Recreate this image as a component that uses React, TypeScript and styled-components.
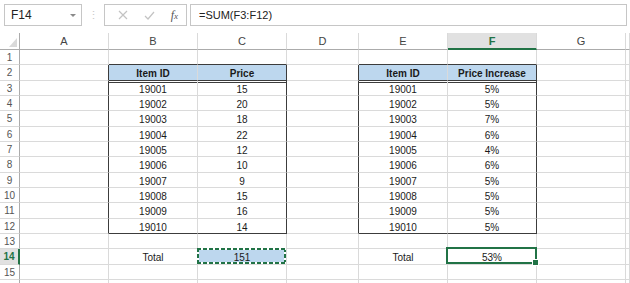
import React from 'react';
import styled, { createGlobalStyle } from 'styled-components';

const GlobalStyle = createGlobalStyle`
  html, body {
    margin: 0;
    padding: 0;
    background: #ffffff;
    overflow: hidden;
  }
  body {
    font-family: "Liberation Sans", Arial, sans-serif;
  }
`;

const GREEN = '#217346';
const GRID = '#dadada';
const HEAD_LINE = '#ababab';
const DARK = '#3c3c3c';
const BLUE = '#bdd7ee';

const columns = ['A', 'B', 'C', 'D', 'E', 'F', 'G'];
const ids = [19001, 19002, 19003, 19004, 19005, 19006, 19007, 19008, 19009, 19010];
const prices = [15, 20, 18, 22, 12, 10, 9, 15, 16, 14];
const increases = [5, 5, 7, 6, 4, 6, 5, 5, 5, 5];

export default function App() {
  // one entry per sheet row, keyed by column letter
  const rowContent = (r: number): Record<string, { text: string; bold?: boolean; fill?: boolean }> => {
    if (r === 2) {
      return {
        B: { text: 'Item ID', bold: true, fill: true },
        C: { text: 'Price', bold: true, fill: true },
        E: { text: 'Item ID', bold: true, fill: true },
        F: { text: 'Price Increase', bold: true, fill: true },
      };
    }
    if (r >= 3 && r <= 12) {
      const i = r - 3;
      return {
        B: { text: String(ids[i]) },
        C: { text: String(prices[i]) },
        E: { text: String(ids[i]) },
        F: { text: increases[i] + '%' },
      };
    }
    if (r === 14) {
      return {
        B: { text: 'Total' },
        C: { text: '151' },
        E: { text: 'Total' },
        F: { text: '53%' },
      };
    }
    return {};
  };

  const inTable = (col: string, r: number) =>
    r >= 2 && r <= 12 && (col === 'B' || col === 'C' || col === 'E' || col === 'F');

  const rows = Array.from({ length: 16 }, (_, i) => i + 1);

  return (
    <>
      <GlobalStyle />
      <Page>
        <FormulaBar>
          <NameBox>
            <span>F14</span>
            <DropArrow />
          </NameBox>
          <Grip>⋮</Grip>
          <FxButtons>
            <svg width="10" height="10" viewBox="0 0 10 10">
              <path d="M1 1 L9 9 M9 1 L1 9" stroke="#c3c3c3" strokeWidth="1.2" fill="none" />
            </svg>
            <svg width="11" height="9" viewBox="0 0 11 9">
              <path d="M1 5 L4 8 L10 1" stroke="#c3c3c3" strokeWidth="1.2" fill="none" />
            </svg>
            <FxLabel>
              f<small>x</small>
            </FxLabel>
          </FxButtons>
          <FormulaInput>=SUM(F3:F12)</FormulaInput>
        </FormulaBar>

        <Sheet>
          <Corner>
            <svg width="8" height="9" viewBox="0 0 8 9">
              <polygon points="8,0 8,9 0,9" fill="#d9d9d9" />
            </svg>
          </Corner>
          {columns.map((c) => (
            <ColHead key={c} $active={c === 'F'}>
              {c}
            </ColHead>
          ))}
          <ColHead $active={false} />

          {rows.map((r) => {
            const content = rowContent(r);
            return (
              <React.Fragment key={r}>
                <RowHead $active={r === 14}>{r <= 15 ? r : ''}</RowHead>
                {columns.map((c) => {
                  const cell = content[c];
                  const darkRight =
                    r >= 2 && r <= 12 && (c === 'A' || c === 'C' || c === 'D' || c === 'F');
                  const darkBottom =
                    (r === 1 || r === 2 || r === 12) &&
                    (c === 'B' || c === 'C' || c === 'E' || c === 'F');
                  return (
                    <Cell
                      key={c}
                      $darkRight={darkRight}
                      $darkBottom={darkBottom}
                      $fill={!!cell?.fill}
                      $bold={!!cell?.bold}
                      $double={r === 3 && inTable(c, r)}
                    >
                      {r === 14 && c === 'C' && <CopyMarquee />}
                      {r === 14 && c === 'F' && (
                        <Selection>
                          <FillHandle />
                        </Selection>
                      )}
                      <CellText>{cell?.text}</CellText>
                    </Cell>
                  );
                })}
                <Cell $darkRight={false} $darkBottom={false} $fill={false} $bold={false} $double={false} />
              </React.Fragment>
            );
          })}
        </Sheet>
      </Page>
    </>
  );
}

const Page = styled.div`
  width: 630px;
  height: 283px;
  overflow: hidden;
  background: #ffffff;
`;

const FormulaBar = styled.div`
  height: 33px;
  box-sizing: border-box;
  padding: 4px 0 0 4px;
  display: flex;
  align-items: flex-start;
`;

const NameBox = styled.div`
  width: 78px;
  height: 22px;
  box-sizing: border-box;
  border: 1px solid #c6c6c6;
  display: flex;
  align-items: center;
  justify-content: space-between;
  padding: 0 5px 0 6px;
  font-size: 12px;
  color: #222;
`;

const DropArrow = styled.div`
  width: 0;
  height: 0;
  border-left: 3px solid transparent;
  border-right: 3px solid transparent;
  border-top: 3px solid #8a8a8a;
`;

const Grip = styled.div`
  width: 22px;
  height: 22px;
  display: flex;
  align-items: center;
  justify-content: center;
  color: #c8c8c8;
  font-size: 11px;
`;

const FxButtons = styled.div`
  width: 83px;
  height: 22px;
  box-sizing: border-box;
  border: 1px solid #c6c6c6;
  display: flex;
  align-items: center;
  justify-content: space-between;
  padding: 0 8px 0 13px;
`;

const FxLabel = styled.span`
  font-family: "Liberation Serif", "Times New Roman", serif;
  font-style: italic;
  font-size: 12px;
  color: #555;
  small {
    font-size: 9px;
  }
`;

const FormulaInput = styled.div`
  margin-left: 3px;
  width: 437px;
  height: 22px;
  box-sizing: border-box;
  border: 1px solid #c6c6c6;
  display: flex;
  align-items: center;
  padding-left: 8px;
  font-size: 11px;
  color: #222;
`;

const Sheet = styled.div`
  display: grid;
  grid-template-columns: 20px 89px 89px 89px 72px 89px 89px 89px 1fr;
  grid-template-rows:
    17px 15px 16px 15px 15px 16px 15px 15px 16px 15px 15px 16px 15px 15px
    16px 15px 15px;
`;

const Corner = styled.div`
  box-sizing: border-box;
  border-right: 1px solid ${HEAD_LINE};
  border-bottom: 1px solid ${HEAD_LINE};
  display: flex;
  align-items: flex-end;
  justify-content: flex-end;
  padding: 0 2px 2px 0;
`;

const ColHead = styled.div<{ $active: boolean }>`
  box-sizing: border-box;
  border-right: 1px solid ${GRID};
  border-bottom: ${({ $active }) => ($active ? `2px solid ${GREEN}` : `1px solid ${HEAD_LINE}`)};
  background: ${({ $active }) => ($active ? '#e1e1e1' : '#ffffff')};
  color: ${({ $active }) => ($active ? GREEN : '#444')};
  font-weight: ${({ $active }) => ($active ? 'bold' : 'normal')};
  font-size: 11px;
  display: flex;
  align-items: center;
  justify-content: center;
  padding-top: ${({ $active }) => ($active ? '1px' : '0')};
`;

const RowHead = styled.div<{ $active: boolean }>`
  box-sizing: border-box;
  border-right: ${({ $active }) => ($active ? `2px solid ${GREEN}` : `1px solid ${HEAD_LINE}`)};
  border-bottom: 1px solid ${GRID};
  background: ${({ $active }) => ($active ? '#e1e1e1' : '#ffffff')};
  color: ${({ $active }) => ($active ? GREEN : '#555')};
  font-weight: ${({ $active }) => ($active ? 'bold' : 'normal')};
  font-size: 10px;
  display: flex;
  align-items: center;
  justify-content: center;
`;

const Cell = styled.div<{
  $darkRight: boolean;
  $darkBottom: boolean;
  $fill: boolean;
  $bold: boolean;
  $double: boolean;
}>`
  position: relative;
  box-sizing: border-box;
  border-right: 1px solid ${({ $darkRight }) => ($darkRight ? DARK : GRID)};
  border-bottom: 1px solid ${({ $darkBottom }) => ($darkBottom ? DARK : GRID)};
  background: ${({ $fill }) => ($fill ? BLUE : '#ffffff')};
  box-shadow: ${({ $double }) => ($double ? `inset 0 1px 0 #ffffff, inset 0 2px 0 ${DARK}` : 'none')};
  font-weight: ${({ $bold }) => ($bold ? 'bold' : 'normal')};
  font-size: 10px;
  color: #1a1a1a;
  display: flex;
  align-items: center;
  justify-content: center;
`;

const CellText = styled.span`
  position: relative;
  top: 1px;
  white-space: nowrap;
`;

const CopyMarquee = styled.div`
  position: absolute;
  left: -1px;
  top: -1px;
  width: 89px;
  height: 16px;
  box-sizing: border-box;
  background:
    repeating-linear-gradient(90deg, ${GREEN} 0 4px, #ffffff 4px 6px) top / 100% 2px no-repeat,
    repeating-linear-gradient(90deg, ${GREEN} 0 4px, #ffffff 4px 6px) bottom / 100% 2px no-repeat,
    repeating-linear-gradient(180deg, ${GREEN} 0 4px, #ffffff 4px 6px) left / 2px 100% no-repeat,
    repeating-linear-gradient(180deg, ${GREEN} 0 4px, #ffffff 4px 6px) right / 2px 100% no-repeat,
    ${BLUE};
`;

const Selection = styled.div`
  position: absolute;
  left: -2px;
  top: -2px;
  width: 91px;
  height: 17px;
  box-sizing: border-box;
  border: 2px solid ${GREEN};
  z-index: 2;
`;

const FillHandle = styled.div`
  position: absolute;
  right: -4px;
  bottom: -4px;
  width: 5px;
  height: 5px;
  background: ${GREEN};
  border: 1px solid #ffffff;
`;
